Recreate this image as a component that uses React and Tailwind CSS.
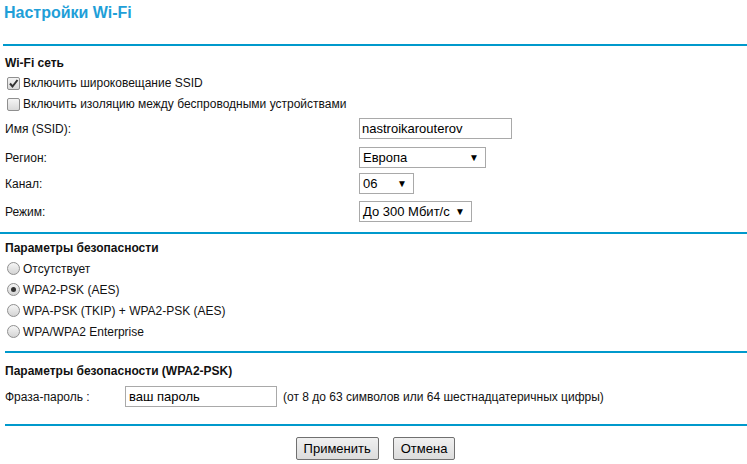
import React from "react";

const font = { fontFamily: '"Liberation Sans", Arial, sans-serif' };

function Check({ checked }) {
  return (
    <span className="relative inline-block w-[13px] h-[13px] rounded-[2px] border border-[#8f8f8f] bg-gradient-to-b from-[#f4f4f4] to-[#d9d9d9] shrink-0">
      {checked && (
        <svg viewBox="0 0 13 13" className="absolute -left-px -top-px w-[13px] h-[13px]">
          <path d="M3 6.5 L5.5 9.5 L10.5 3" fill="none" stroke="#333" strokeWidth="2" />
        </svg>
      )}
    </span>
  );
}

function Radio({ checked }) {
  return (
    <span className="relative inline-flex items-center justify-center w-[13px] h-[13px] rounded-full border border-[#8f8f8f] bg-gradient-to-b from-[#f6f6f6] to-[#d4d4d4] shrink-0">
      {checked && <span className="w-[5px] h-[5px] rounded-full bg-[#333]" />}
    </span>
  );
}

function Select({ value, width }) {
  return (
    <div
      className="flex items-center justify-between h-[21px] border border-[#a9a9a9] bg-white pl-[3px] pr-[6px] text-[13px] text-black"
      style={{ width }}
    >
      <span>{value}</span>
      <span className="text-[10px]">▼</span>
    </div>
  );
}

function Field({ label, children, className = "" }) {
  return (
    <div className={`flex items-center ${className}`}>
      <div className="w-[359px] pl-[5px]">{label}</div>
      {children}
    </div>
  );
}

function Line({ inset = "ml-[5px]", className = "" }) {
  return <div className={`h-[2px] bg-[#0099cc] ${inset} ${className}`} />;
}

export default function App() {
  return (
    <div className="w-[747px] h-[464px] bg-white text-[12px] text-[#111] overflow-hidden" style={font}>
      <div className="h-[44px] pl-[4px] pt-[2px]">
        <h1 className="text-[16px] font-bold text-[#1f9fd8] leading-[22px]">Настройки Wi-Fi</h1>
      </div>
      <Line inset="ml-[3px]" />

      {/* Wi-Fi network */}
      <div className="mt-[7px] h-[20px] flex items-center pl-[5px] font-bold">Wi-Fi сеть</div>
      <div className="h-[20px] flex items-center pl-[7px] gap-[3px]">
        <Check checked />
        <span>Включить широковещание SSID</span>
      </div>
      <div className="h-[22px] flex items-center pl-[7px] gap-[3px]">
        <Check />
        <span>Включить изоляцию между беспроводными устройствами</span>
      </div>

      <Field label="Имя (SSID):" className="mt-[3px]">
        <div className="w-[153px] h-[21px] border border-[#a9a9a9] flex items-center pl-[2px] text-[13px] text-black">
          nastroikarouterov
        </div>
      </Field>
      <Field label="Регион:" className="mt-[8px]">
        <Select value="Европа" width={127} />
      </Field>
      <Field label="Канал:" className="mt-[5px]">
        <Select value="06" width={55} />
      </Field>
      <Field label="Режим:" className="mt-[7px]">
        <Select value="До 300 Мбит/с" width={113} />
      </Field>

      <Line inset="" className="mt-[10px]" />

      {/* security */}
      <div className="mt-[4px] h-[20px] flex items-center pl-[5px] font-bold">Параметры безопасности</div>
      {[
        ["Отсутствует", false],
        ["WPA2-PSK (AES)", true],
        ["WPA-PSK (TKIP) + WPA2-PSK (AES)", false],
        ["WPA/WPA2 Enterprise", false],
      ].map(([t, on]) => (
        <div key={t} className="h-[21px] flex items-center pl-[7px] gap-[3px]">
          <Radio checked={on} />
          <span>{t}</span>
        </div>
      ))}

      <Line className="mt-[9px]" />

      <div className="mt-[8px] h-[20px] flex items-center pl-[5px] font-bold">
        Параметры безопасности (WPA2-PSK)
      </div>
      <div className="mt-[5px] flex items-center">
        <div className="w-[125px] pl-[5px]">Фраза-пароль :</div>
        <div className="w-[152px] h-[21px] border border-[#a9a9a9] flex items-center pl-[3px] text-[13px] text-black">
          ваш пароль
        </div>
        <span className="ml-[6px]">(от 8 до 63 символов или 64 шестнадцатеричных цифры)</span>
      </div>

      <Line className="mt-[17px]" />

      <div className="mt-[11px] flex justify-center gap-[14px] pl-[4px] text-[13px]">
        <button className="h-[23px] px-[7px] border border-[#707070] rounded-[2px] bg-gradient-to-b from-[#f0f0f0] to-[#dcdcdc] text-black">
          Применить
        </button>
        <button className="h-[23px] px-[7px] border border-[#707070] rounded-[2px] bg-gradient-to-b from-[#f0f0f0] to-[#dcdcdc] text-black">
          Отмена
        </button>
      </div>
    </div>
  );
}
